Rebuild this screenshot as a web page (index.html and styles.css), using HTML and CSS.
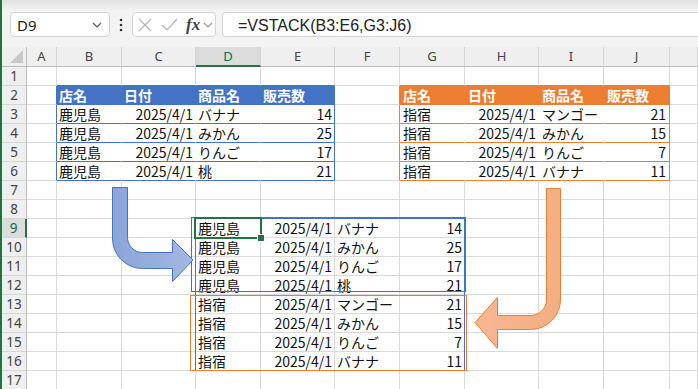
FILE: index.html
```html
<!DOCTYPE html>
<html lang="ja">
<head>
    <meta charset="UTF-8">
    <title>VSTACK</title>
    <link rel="stylesheet" href="styles.css">
</head>
<body>
    <div class="app">
        <!-- 数式バー -->
        <div class="formula-bar">
            <div class="name-box">
                <span class="cell-ref">D9</span>
                <svg class="chev" width="10" height="6" viewBox="0 0 10 6"><path d="M1 1 L5 5 L9 1" fill="none" stroke="#555" stroke-width="1.2"/></svg>
            </div>
            <div class="bar-dots">
                <svg width="4" height="14" viewBox="0 0 4 14"><circle cx="2" cy="2" r="1.3" fill="#333"/><circle cx="2" cy="7" r="1.3" fill="#333"/><circle cx="2" cy="12" r="1.3" fill="#333"/></svg>
            </div>
            <div class="fx-box">
                <svg width="14" height="14" viewBox="0 0 14 14"><path d="M1 1 L13 13 M13 1 L1 13" stroke="#b4b4b4" stroke-width="1.2"/></svg>
                <svg class="check" width="17" height="13" viewBox="0 0 17 13"><path d="M1 7 L6 12 L16 1" fill="none" stroke="#b4b4b4" stroke-width="1.2"/></svg>
                <span class="fx">fx</span>
                <svg class="chev" width="10" height="6" viewBox="0 0 10 6"><path d="M1 1 L5 5 L9 1" fill="none" stroke="#999" stroke-width="1.2"/></svg>
            </div>
            <div class="formula-input">=VSTACK(B3:E6,G3:J6)</div>
        </div>

        <!-- シート -->
        <div class="sheet">
            <div class="row heads">
                <div class="corner"><span class="tri"></span></div>
                <div>A</div><div>B</div><div>C</div><div class="sel-col">D</div><div>E</div><div>F</div><div>G</div><div>H</div><div>I</div><div>J</div><div></div>
            </div>
            <div class="row">
                <div class="rh">1</div>
                <div></div><div class="bt"></div><div class="bt"></div><div class="bt"></div><div class="bt"></div><div></div><div class="ot"></div><div class="ot"></div><div class="ot"></div><div class="ot"></div><div></div>
            </div>
            <div class="row">
                <div class="rh">2</div>
                <div class="bl"></div><div class="hb">店名</div><div class="hb">日付</div><div class="hb">商品名</div><div class="hb">販売数</div><div class="ol"></div><div class="ho">店名</div><div class="ho">日付</div><div class="ho">商品名</div><div class="ho">販売数</div><div></div>
            </div>
            <div class="row">
                <div class="rh">3</div>
                <div class="bl"></div><div class="db">鹿児島</div><div class="db num">2025/4/1</div><div class="db">バナナ</div><div class="db num end">14</div><div class="ol"></div><div class="do">指宿</div><div class="do num">2025/4/1</div><div class="do">マンゴー</div><div class="do num end">21</div><div></div>
            </div>
            <div class="row">
                <div class="rh">4</div>
                <div class="bl"></div><div class="db">鹿児島</div><div class="db num">2025/4/1</div><div class="db">みかん</div><div class="db num end">25</div><div class="ol"></div><div class="do">指宿</div><div class="do num">2025/4/1</div><div class="do">みかん</div><div class="do num end">15</div><div></div>
            </div>
            <div class="row">
                <div class="rh">5</div>
                <div class="bl"></div><div class="db">鹿児島</div><div class="db num">2025/4/1</div><div class="db">りんご</div><div class="db num end">17</div><div class="ol"></div><div class="do">指宿</div><div class="do num">2025/4/1</div><div class="do">りんご</div><div class="do num end">7</div><div></div>
            </div>
            <div class="row">
                <div class="rh">6</div>
                <div class="bl"></div><div class="db">鹿児島</div><div class="db num">2025/4/1</div><div class="db">桃</div><div class="db num end">21</div><div class="ol"></div><div class="do">指宿</div><div class="do num">2025/4/1</div><div class="do">バナナ</div><div class="do num end">11</div><div></div>
            </div>
            <div class="row">
                <div class="rh">7</div>
                <div></div><div></div><div></div><div></div><div></div><div></div><div></div><div></div><div></div><div></div><div></div>
            </div>
            <div class="row">
                <div class="rh">8</div>
                <div></div><div></div><div></div><div></div><div></div><div></div><div></div><div></div><div></div><div></div><div></div>
            </div>
            <div class="row">
                <div class="rh sel-row">9</div>
                <div></div><div></div><div></div><div>鹿児島</div><div class="num">2025/4/1</div><div>バナナ</div><div class="num">14</div><div></div><div></div><div></div><div></div>
            </div>
            <div class="row">
                <div class="rh">10</div>
                <div></div><div></div><div></div><div>鹿児島</div><div class="num">2025/4/1</div><div>みかん</div><div class="num">25</div><div></div><div></div><div></div><div></div>
            </div>
            <div class="row">
                <div class="rh">11</div>
                <div></div><div></div><div></div><div>鹿児島</div><div class="num">2025/4/1</div><div>りんご</div><div class="num">17</div><div></div><div></div><div></div><div></div>
            </div>
            <div class="row">
                <div class="rh">12</div>
                <div></div><div></div><div></div><div>鹿児島</div><div class="num">2025/4/1</div><div>桃</div><div class="num">21</div><div></div><div></div><div></div><div></div>
            </div>
            <div class="row">
                <div class="rh">13</div>
                <div></div><div></div><div></div><div>指宿</div><div class="num">2025/4/1</div><div>マンゴー</div><div class="num">21</div><div></div><div></div><div></div><div></div>
            </div>
            <div class="row">
                <div class="rh">14</div>
                <div></div><div></div><div></div><div>指宿</div><div class="num">2025/4/1</div><div>みかん</div><div class="num">15</div><div></div><div></div><div></div><div></div>
            </div>
            <div class="row">
                <div class="rh">15</div>
                <div></div><div></div><div></div><div>指宿</div><div class="num">2025/4/1</div><div>りんご</div><div class="num">7</div><div></div><div></div><div></div><div></div>
            </div>
            <div class="row">
                <div class="rh">16</div>
                <div></div><div></div><div></div><div>指宿</div><div class="num">2025/4/1</div><div>バナナ</div><div class="num">11</div><div></div><div></div><div></div><div></div>
            </div>
            <div class="row">
                <div class="rh">17</div>
                <div></div><div></div><div></div><div></div><div></div><div></div><div></div><div></div><div></div><div></div><div></div>
            </div>
        </div>
    </div>

    <!-- 図形・選択枠 -->
    <div class="spill"></div>
    <div class="box-blue"></div>
    <div class="box-orange"></div>
    <div class="selection"><span class="handle"></span></div>

    <svg class="arrows" width="698" height="389" viewBox="0 0 698 389">
        <defs>
            <linearGradient id="gb" x1="0" y1="0" x2="1" y2="0">
                <stop offset="0" stop-color="#8aa5d9"/>
                <stop offset="1" stop-color="#a3b8e3"/>
            </linearGradient>
            <linearGradient id="go" x1="0" y1="0" x2="1" y2="0">
                <stop offset="0" stop-color="#f5b792"/>
                <stop offset="1" stop-color="#f3ae83"/>
            </linearGradient>
        </defs>
        <path d="M112.5,187.5 H127.5 V237 A15,15 0 0 0 142.5,252.5 H172.5 V239.5 L193,260 L172.5,281.5 V268.5 H142.5 A30,30 0 0 1 112.5,238 Z" fill="url(#gb)" stroke="#4a72c2" stroke-width="1"/>
        <path d="M546.5,188.5 H560.5 V299 A30,30 0 0 1 530.5,329.5 H497.5 V348.5 L475,322.5 L497.5,297.5 V315.5 H530.5 A16,16 0 0 0 546.5,299 Z" fill="url(#go)" stroke="#ed7d31" stroke-width="1"/>
    </svg>
</body>
</html>
```

FILE: styles.css
```css
/* 基本 */
* {
    box-sizing: border-box;
}

body {
    margin: 0;
    width: 698px;
    height: 389px;
    overflow: hidden;
    position: relative;
    background: #fff;
    font-family: "Noto Sans CJK JP", sans-serif;
}

.app {
    height: 389px;
    border-left: 2px solid #217346;
}

/* 数式バー */
.formula-bar {
    height: 47px;
    display: flex;
    align-items: flex-start;
    padding: 12px 0 0 8px;
    background: linear-gradient(to bottom, #e0e0e0 0, #f3f3f3 11px, #f3f3f3 100%);
}

.name-box,
.fx-box {
    height: 25px;
    background: #fff;
    border: 1px solid #d4d4d4;
    border-radius: 4px;
    display: flex;
    align-items: center;
}

.name-box {
    width: 100px;
    padding: 0 7px 0 6px;
    justify-content: space-between;
}

.cell-ref {
    font-family: "Noto Sans", sans-serif;
    font-size: 15px;
    color: #222;
}

.bar-dots {
    width: 22px;
    height: 25px;
    display: flex;
    align-items: center;
    justify-content: center;
}

.fx-box {
    width: 84px;
    padding-left: 5px;
}

.check {
    margin-left: 9px;
}

.fx {
    margin-left: 8px;
    font-family: "Liberation Serif", serif;
    font-style: italic;
    font-weight: bold;
    font-size: 17px;
    color: #444;
    line-height: 20px;
}

.fx-box .chev {
    margin-left: 3px;
}

.formula-input {
    flex-grow: 1;
    height: 25px;
    margin-left: 6px;
    background: #fff;
    border: 1px solid #d4d4d4;
    border-right: none;
    border-radius: 4px 0 0 4px;
    padding: 1px 0 0 15px;
    font-family: "Liberation Sans", sans-serif;
    font-size: 16px;
    line-height: 23px;
    color: #222;
}

/* シート */
.row {
    display: grid;
    grid-template-columns: 25px 30px 65px 74px 65px 74px 65px 65px 74px 65px 66px 1fr;
    height: 19px;
}

.row > div {
    border-right: 1px solid #dadada;
    border-bottom: 1px solid #dadada;
    font-size: 14px;
    line-height: 18px;
    color: #111;
    padding: 0 2px;
    white-space: nowrap;
    overflow: hidden;
}

.row > .num {
    text-align: right;
}

/* 見出し */
.heads {
    height: 20px;
}

.heads > div {
    background: #efefef;
    border-right-color: #d5d5d5;
    border-bottom-color: #bdbdbd;
    font-family: "Noto Sans", sans-serif;
    font-size: 13px;
    line-height: 19px;
    color: #444;
    text-align: center;
}

.heads > .corner {
    position: relative;
    border-right-color: #bdbdbd;
}

.tri {
    position: absolute;
    right: 3px;
    bottom: 3px;
    width: 13px;
    height: 13px;
    background: #c8c8c8;
    clip-path: polygon(100% 0, 100% 100%, 0 100%);
}

.heads > .sel-col {
    background: #dcdcdc;
    border-bottom: 2px solid #217346;
    color: #1b6a3e;
}

.row > .rh {
    background: #efefef;
    border-right-color: #bdbdbd;
    border-bottom-color: #d5d5d5;
    font-family: "Noto Sans", sans-serif;
    font-size: 13.5px;
    color: #444;
    text-align: center;
    padding: 0;
}

.row > .sel-row {
    background: #dcdcdc;
    border-right: 2px solid #217346;
    color: #1b6a3e;
}

/* 青テーブル */
.row > .bt {
    border-bottom-color: #4472c4;
}

.row > .bl {
    border-right-color: #4472c4;
}

.row > .hb {
    background: #4472c4;
    border-color: #4472c4;
    color: #fff;
    font-weight: bold;
}

.row > .db {
    border-right-color: #fff;
    border-bottom-color: #4472c4;
}

.row > .db.end {
    border-right-color: #4472c4;
}

/* オレンジテーブル */
.row > .ot {
    border-bottom-color: #ed7d31;
}

.row > .ol {
    border-right-color: #ed7d31;
}

.row > .ho {
    background: #ed7d31;
    border-color: #ed7d31;
    color: #fff;
    font-weight: bold;
    padding-left: 3px;
}

.row > .do {
    border-right-color: #fff;
    border-bottom-color: #ed7d31;
    padding-left: 3px;
}

.row > .do.end {
    border-right-color: #ed7d31;
    padding-right: 3px;
}

/* 重ねる枠 */
.spill {
    position: absolute;
    left: 195px;
    top: 218px;
    width: 270px;
    height: 153px;
    border: 1px solid #4472c4;
}

.box-blue {
    position: absolute;
    left: 191px;
    top: 217px;
    width: 275px;
    height: 75px;
    border: 1px solid #4472c4;
}

.box-orange {
    position: absolute;
    left: 190px;
    top: 295px;
    width: 277px;
    height: 76px;
    border: 1px solid #ed7d31;
}

.selection {
    position: absolute;
    left: 194px;
    top: 217px;
    width: 68px;
    height: 22px;
    border: 2px solid #217346;
}

.handle {
    position: absolute;
    right: -4px;
    bottom: -4px;
    width: 6px;
    height: 6px;
    background: #217346;
    outline: 1px solid #fff;
}

.arrows {
    position: absolute;
    left: 0;
    top: 0;
    pointer-events: none;
}
```
